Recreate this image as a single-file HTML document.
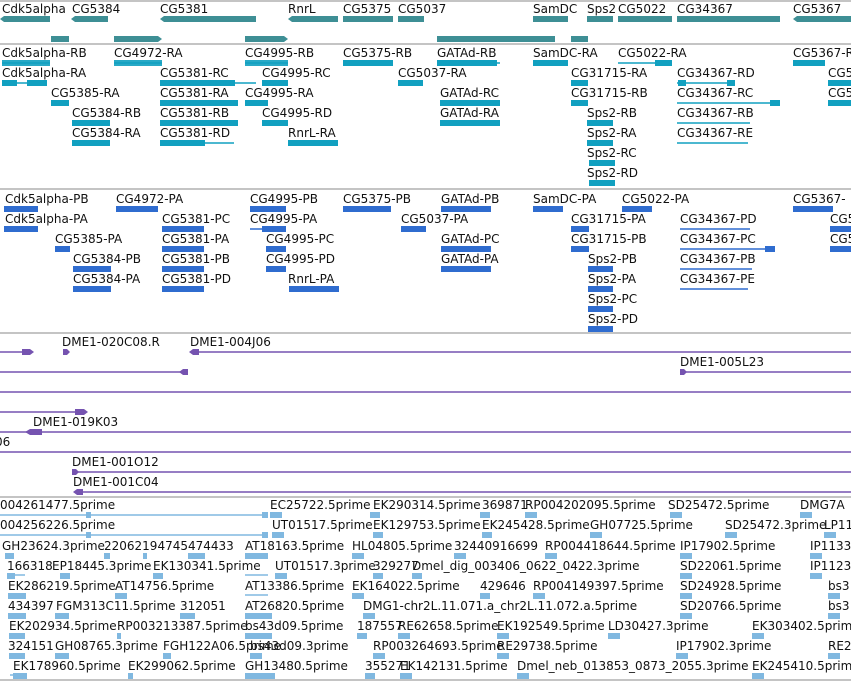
<!DOCTYPE html>
<html><head><meta charset="utf-8"><style>
body{margin:0;background:#fff;}
svg{display:block}
text{font-family:"DejaVu Sans","Liberation Sans",sans-serif;font-size:12px;fill:#111;}
.g{fill:#3e8f95}.t{fill:#11a0c0}.p{fill:#2f6ccf}.u{fill:#7553b0}.l{fill:#80b8e0}
.tl{stroke:#11a0c0;stroke-width:1.5}.pl{stroke:#2f6ccf;stroke-width:1.5}.ul{stroke:#7553b0;stroke-width:1.5}.ll{stroke:#80b8e0;stroke-width:1.5}
</style></head><body>
<svg width="851" height="681" viewBox="0 0 851 681">
<g stroke="#c4c4c4" stroke-width="2">
<line x1="0" y1="1" x2="851" y2="1"/><line x1="0" y1="44" x2="851" y2="44"/><line x1="0" y1="189" x2="851" y2="189"/><line x1="0" y1="333" x2="851" y2="333"/><line x1="0" y1="497" x2="851" y2="497"/><line x1="0" y1="680" x2="851" y2="680"/>
</g>
<text x="2" y="13">Cdk5alpha</text><text x="72" y="13">CG5384</text><text x="160" y="13">CG5381</text><text x="288" y="13">RnrL</text><text x="343" y="13">CG5375</text><text x="398" y="13">CG5037</text><text x="533" y="13">SamDC</text><text x="587" y="13">Sps2</text><text x="618" y="13">CG5022</text><text x="677" y="13">CG34367</text><text x="793" y="13">CG5367</text>
<g class="g">
<polygon points="0,19 4,16 50,16 50,22 4,22"/><polygon points="71,19 75,16 108,16 108,22 75,22"/><polygon points="160,19 164,16 256,16 256,22 164,22"/><polygon points="288,19 292,16 338,16 338,22 292,22"/><rect x="343" y="16" width="50" height="6"/><rect x="398" y="16" width="26" height="6"/><rect x="533" y="16" width="35" height="6"/><rect x="587" y="16" width="26" height="6"/><rect x="618" y="16" width="54" height="6"/><rect x="677" y="16" width="103" height="6"/><polygon points="793,19 797,16 851,16 851,22 797,22"/>
<rect x="51" y="36" width="18" height="6"/><polygon points="114,36 158,36 162,39 158,42 114,42"/><polygon points="245,36 284,36 288,39 284,42 245,42"/><rect x="437" y="36" width="118" height="6"/><rect x="571" y="36" width="17" height="6"/>
</g>
<text x="2" y="57">Cdk5alpha-RB</text><text x="114" y="57">CG4972-RA</text><text x="245" y="57">CG4995-RB</text><text x="343" y="57">CG5375-RB</text><text x="437" y="57">GATAd-RB</text><text x="533" y="57">SamDC-RA</text><text x="618" y="57">CG5022-RA</text><text x="793" y="57">CG5367-R</text>
<text x="2" y="77">Cdk5alpha-RA</text><text x="160" y="77">CG5381-RC</text><text x="262" y="77">CG4995-RC</text><text x="398" y="77">CG5037-RA</text><text x="571" y="77">CG31715-RA</text><text x="677" y="77">CG34367-RD</text><text x="828" y="77">CG5</text>
<text x="51" y="97">CG5385-RA</text><text x="160" y="97">CG5381-RA</text><text x="245" y="97">CG4995-RA</text><text x="440" y="97">GATAd-RC</text><text x="571" y="97">CG31715-RB</text><text x="677" y="97">CG34367-RC</text><text x="828" y="97">CG5</text>
<text x="72" y="117">CG5384-RB</text><text x="160" y="117">CG5381-RB</text><text x="262" y="117">CG4995-RD</text><text x="440" y="117">GATAd-RA</text><text x="587" y="117">Sps2-RB</text><text x="677" y="117">CG34367-RB</text>
<text x="72" y="137">CG5384-RA</text><text x="160" y="137">CG5381-RD</text><text x="288" y="137">RnrL-RA</text><text x="587" y="137">Sps2-RA</text><text x="677" y="137">CG34367-RE</text>
<text x="587" y="157">Sps2-RC</text><text x="587" y="177">Sps2-RD</text>
<g class="tl">
<line x1="2" y1="63" x2="50" y2="63"/><line x1="114" y1="63" x2="162" y2="63"/><line x1="245" y1="63" x2="288" y2="63"/><line x1="343" y1="63" x2="393" y2="63"/><line x1="437" y1="63" x2="500" y2="63"/><line x1="618" y1="63" x2="672" y2="63"/>
<line x1="2" y1="83" x2="47" y2="83"/><line x1="160" y1="83" x2="256" y2="83"/><line x1="262" y1="83" x2="288" y2="83"/><line x1="398" y1="83" x2="423" y2="83"/><line x1="677" y1="83" x2="735" y2="83"/>
<line x1="160" y1="103" x2="238" y2="103"/><line x1="245" y1="103" x2="268" y2="103"/><line x1="440" y1="103" x2="500" y2="103"/><line x1="677" y1="103" x2="780" y2="103"/>
<line x1="160" y1="123" x2="238" y2="123"/><line x1="440" y1="123" x2="500" y2="123"/><line x1="677" y1="123" x2="750" y2="123"/>
<line x1="160" y1="143" x2="234" y2="143"/><line x1="677" y1="143" x2="748" y2="143"/>
</g>
<g class="t">
<rect x="2" y="60" width="48" height="6" opacity=".9"/><rect x="114" y="60" width="48" height="6" opacity=".9"/><rect x="245" y="60" width="43" height="6" opacity=".9"/><rect x="343" y="60" width="50" height="6"/><rect x="437" y="60" width="60" height="6"/><rect x="533" y="60" width="35" height="6"/><rect x="655" y="60" width="17" height="6"/><rect x="793" y="60" width="32" height="6"/>
<rect x="2" y="80" width="15" height="6"/><rect x="27" y="80" width="20" height="6"/><rect x="160" y="80" width="75" height="6"/><rect x="262" y="80" width="26" height="6"/><rect x="398" y="80" width="25" height="6"/><rect x="571" y="80" width="17" height="6"/><rect x="678" y="80" width="8" height="6"/><rect x="727" y="80" width="8" height="6"/><rect x="828" y="80" width="23" height="6"/>
<rect x="51" y="100" width="18" height="6"/><rect x="160" y="100" width="78" height="6"/><rect x="245" y="100" width="23" height="6"/><rect x="440" y="100" width="60" height="6"/><rect x="571" y="100" width="17" height="6"/><rect x="770" y="100" width="10" height="6"/><rect x="828" y="100" width="23" height="6"/>
<rect x="72" y="120" width="38" height="6"/><rect x="160" y="120" width="78" height="6"/><rect x="262" y="120" width="26" height="6"/><rect x="440" y="120" width="60" height="6"/><rect x="587" y="120" width="26" height="6"/>
<rect x="72" y="140" width="38" height="6"/><rect x="160" y="140" width="45" height="6"/><rect x="288" y="140" width="50" height="6"/><rect x="587" y="140" width="26" height="6"/>
<rect x="589" y="160" width="26" height="6"/><rect x="589" y="180" width="26" height="6"/>
</g>
<text x="5" y="203">Cdk5alpha-PB</text><text x="116" y="203">CG4972-PA</text><text x="250" y="203">CG4995-PB</text><text x="343" y="203">CG5375-PB</text><text x="441" y="203">GATAd-PB</text><text x="533" y="203">SamDC-PA</text><text x="622" y="203">CG5022-PA</text><text x="793" y="203">CG5367-</text>
<text x="5" y="223">Cdk5alpha-PA</text><text x="162" y="223">CG5381-PC</text><text x="250" y="223">CG4995-PA</text><text x="401" y="223">CG5037-PA</text><text x="571" y="223">CG31715-PA</text><text x="680" y="223">CG34367-PD</text><text x="830" y="223">CG5</text>
<text x="55" y="243">CG5385-PA</text><text x="162" y="243">CG5381-PA</text><text x="266" y="243">CG4995-PC</text><text x="441" y="243">GATAd-PC</text><text x="571" y="243">CG31715-PB</text><text x="680" y="243">CG34367-PC</text><text x="830" y="243">CG5</text>
<text x="73" y="263">CG5384-PB</text><text x="162" y="263">CG5381-PB</text><text x="266" y="263">CG4995-PD</text><text x="441" y="263">GATAd-PA</text><text x="588" y="263">Sps2-PB</text><text x="680" y="263">CG34367-PB</text>
<text x="73" y="283">CG5384-PA</text><text x="162" y="283">CG5381-PD</text><text x="288" y="283">RnrL-PA</text><text x="588" y="283">Sps2-PA</text><text x="680" y="283">CG34367-PE</text>
<text x="588" y="303">Sps2-PC</text><text x="588" y="323">Sps2-PD</text>
<g class="pl">
<line x1="680" y1="229" x2="750" y2="229"/><line x1="680" y1="249" x2="775" y2="249"/><line x1="680" y1="269" x2="752" y2="269"/><line x1="680" y1="289" x2="748" y2="289"/><line x1="250" y1="209" x2="286" y2="209"/><line x1="250" y1="229" x2="286" y2="229"/>
</g>
<g class="p">
<rect x="4" y="206" width="34" height="6"/><rect x="116" y="206" width="42" height="6"/><rect x="250" y="206" width="36" height="6"/><rect x="343" y="206" width="48" height="6"/><rect x="441" y="206" width="50" height="6"/><rect x="533" y="206" width="30" height="6"/><rect x="622" y="206" width="30" height="6"/><rect x="793" y="206" width="40" height="6"/>
<rect x="4" y="226" width="34" height="6"/><rect x="162" y="226" width="42" height="6"/><rect x="262" y="226" width="24" height="6"/><rect x="401" y="226" width="25" height="6"/><rect x="571" y="226" width="18" height="6"/><rect x="830" y="226" width="21" height="6"/>
<rect x="55" y="246" width="15" height="6"/><rect x="162" y="246" width="42" height="6"/><rect x="266" y="246" width="20" height="6"/><rect x="441" y="246" width="50" height="6"/><rect x="571" y="246" width="18" height="6"/><rect x="765" y="246" width="10" height="6"/><rect x="830" y="246" width="21" height="6"/>
<rect x="73" y="266" width="38" height="6"/><rect x="162" y="266" width="42" height="6"/><rect x="266" y="266" width="20" height="6"/><rect x="441" y="266" width="50" height="6"/><rect x="588" y="266" width="25" height="6"/>
<rect x="73" y="286" width="38" height="6"/><rect x="162" y="286" width="42" height="6"/><rect x="289" y="286" width="50" height="6"/><rect x="588" y="286" width="25" height="6"/>
<rect x="588" y="306" width="25" height="6"/><rect x="588" y="326" width="25" height="6"/>
</g>
<text x="62" y="346">DME1-020C08.R</text><text x="190" y="346">DME1-004J06</text><text x="680" y="366">DME1-005L23</text><text x="33" y="426">DME1-019K03</text><text x="-5" y="446">06</text><text x="72" y="466">DME1-001O12</text><text x="73" y="486">DME1-001C04</text>
<g class="ul">
<line x1="0" y1="352" x2="30" y2="352"/><line x1="192" y1="352" x2="851" y2="352"/><line x1="0" y1="372" x2="185" y2="372"/><line x1="680" y1="372" x2="851" y2="372"/><line x1="0" y1="392" x2="851" y2="392"/><line x1="0" y1="412" x2="85" y2="412"/><line x1="0" y1="432" x2="851" y2="432"/><line x1="0" y1="452" x2="851" y2="452"/><line x1="72" y1="472" x2="851" y2="472"/><line x1="75" y1="492" x2="851" y2="492"/>
</g>
<g class="u">
<polygon points="22,349 30,349 34,352 30,355 22,355"/><polygon points="63,349 67,349 70,352 67,355 63,355"/><polygon points="189,352 193,349 199,349 199,355 193,355"/><polygon points="179,372 183,369 188,369 188,375 183,375"/><polygon points="680,369 684,369 687,372 684,375 680,375"/><polygon points="75,409 84,409 88,412 84,415 75,415"/><polygon points="25,432 30,429 42,429 42,435 30,435"/><polygon points="72,469 76,469 79,472 76,475 72,475"/><polygon points="73,492 77,489 83,489 83,495 77,495"/>
</g>
<text x="0" y="509">004261477.5prime</text><text x="270" y="509">EC25722.5prime</text><text x="373" y="509">EK290314.5prime</text><text x="482" y="509">369871</text><text x="525" y="509">RP004202095.5prime</text><text x="668" y="509">SD25472.5prime</text><text x="800" y="509">DMG7A</text>
<text x="0" y="529">004256226.5prime</text><text x="272" y="529">UT01517.5prime</text><text x="373" y="529">EK129753.5prime</text><text x="482" y="529">EK245428.5prime</text><text x="590" y="529">GH07725.5prime</text><text x="725" y="529">SD25472.3prime</text><text x="824" y="529">LP11</text>
<text x="2" y="550">GH23624.3prime</text><text x="104" y="550">22062194745474433</text><text x="245" y="550">AT18163.5prime</text><text x="352" y="550">HL04805.5prime</text><text x="454" y="550">32440916699</text><text x="545" y="550">RP004418644.5prime</text><text x="680" y="550">IP17902.5prime</text><text x="810" y="550">IP1133</text>
<text x="7" y="570">166318</text><text x="52" y="570">EP18445.3prime</text><text x="153" y="570">EK130341.5prime</text><text x="275" y="570">UT01517.3prime</text><text x="373" y="570">329277</text><text x="412" y="570">Dmel_dig_003406_0622_0422.3prime</text><text x="680" y="570">SD22061.5prime</text><text x="810" y="570">IP1123</text>
<text x="8" y="590">EK286219.5prime</text><text x="115" y="590">AT14756.5prime</text><text x="245" y="590">AT13386.5prime</text><text x="352" y="590">EK164022.5prime</text><text x="480" y="590">429646</text><text x="533" y="590">RP004149397.5prime</text><text x="680" y="590">SD24928.5prime</text><text x="828" y="590">bs3</text>
<text x="8" y="610">434397</text><text x="56" y="610">FGM313C11.5prime</text><text x="180" y="610">312051</text><text x="245" y="610">AT26820.5prime</text><text x="363" y="610">DMG1-chr2L.11.071.a_chr2L.11.072.a.5prime</text><text x="680" y="610">SD20766.5prime</text><text x="828" y="610">bs3</text>
<text x="9" y="630">EK202934.5prime</text><text x="117" y="630">RP003213387.5prime</text><text x="245" y="630">bs43d09.5prime</text><text x="357" y="630">187557</text><text x="398" y="630">RE62658.5prime</text><text x="497" y="630">EK192549.5prime</text><text x="608" y="630">LD30427.3prime</text><text x="752" y="630">EK303402.5prime</text>
<text x="8" y="650">324151</text><text x="55" y="650">GH08765.3prime</text><text x="163" y="650">FGH122A06.5prime</text><text x="250" y="650">bs43d09.3prime</text><text x="373" y="650">RP003264693.5prime</text><text x="497" y="650">RE29738.5prime</text><text x="676" y="650">IP17902.3prime</text><text x="828" y="650">RE2</text>
<text x="13" y="670">EK178960.5prime</text><text x="128" y="670">EK299062.5prime</text><text x="245" y="670">GH13480.5prime</text><text x="365" y="670">355271</text><text x="400" y="670">EK142131.5prime</text><text x="517" y="670">Dmel_neb_013853_0873_2055.3prime</text><text x="752" y="670">EK245410.5prime</text>
<g class="ll">
<line x1="0" y1="515" x2="265" y2="515"/><line x1="0" y1="535" x2="265" y2="535"/><line x1="245" y1="555" x2="268" y2="555"/><line x1="245" y1="575" x2="268" y2="575"/><line x1="245" y1="595" x2="268" y2="595"/><line x1="10" y1="575" x2="25" y2="575"/><line x1="10" y1="595" x2="25" y2="595"/><line x1="10" y1="615" x2="25" y2="615"/><line x1="10" y1="675" x2="25" y2="675"/>
</g>
<g class="l">
<rect x="86" y="512" width="5" height="6"/><rect x="262" y="512" width="6" height="6"/><rect x="270" y="512" width="12" height="6"/><rect x="370" y="512" width="10" height="6"/><rect x="480" y="512" width="10" height="6"/><rect x="525" y="512" width="12" height="6"/><rect x="670" y="512" width="12" height="6"/><rect x="800" y="512" width="12" height="6"/>
<rect x="86" y="532" width="5" height="6"/><rect x="262" y="532" width="6" height="6"/><rect x="272" y="532" width="12" height="6"/><rect x="373" y="532" width="10" height="6"/><rect x="482" y="532" width="10" height="6"/><rect x="590" y="532" width="12" height="6"/><rect x="725" y="532" width="12" height="6"/><rect x="824" y="532" width="12" height="6"/>
<rect x="5" y="553" width="9" height="6"/><rect x="104" y="553" width="6" height="6"/><rect x="143" y="553" width="4" height="6"/><rect x="188" y="553" width="17" height="6"/><rect x="245" y="553" width="23" height="6"/><rect x="352" y="553" width="12" height="6"/><rect x="454" y="553" width="12" height="6"/><rect x="545" y="553" width="12" height="6"/><rect x="680" y="553" width="12" height="6"/><rect x="810" y="553" width="12" height="6"/>
<rect x="7" y="573" width="8" height="6"/><rect x="60" y="573" width="10" height="6"/><rect x="153" y="573" width="10" height="6"/><rect x="275" y="573" width="12" height="6"/><rect x="373" y="573" width="10" height="6"/><rect x="412" y="573" width="10" height="6"/><rect x="680" y="573" width="12" height="6"/><rect x="810" y="573" width="12" height="6"/>
<rect x="8" y="593" width="18" height="6"/><rect x="115" y="593" width="12" height="6"/><rect x="352" y="593" width="12" height="6"/><rect x="480" y="593" width="10" height="6"/><rect x="533" y="593" width="12" height="6"/><rect x="680" y="593" width="12" height="6"/><rect x="828" y="593" width="12" height="6"/>
<rect x="8" y="613" width="18" height="6"/><rect x="55" y="613" width="14" height="6"/><rect x="180" y="613" width="15" height="6"/><rect x="245" y="613" width="27" height="6"/><rect x="363" y="613" width="12" height="6"/><rect x="680" y="613" width="12" height="6"/><rect x="828" y="613" width="12" height="6"/>
<rect x="9" y="633" width="16" height="6"/><rect x="117" y="633" width="4" height="6"/><rect x="245" y="633" width="27" height="6"/><rect x="357" y="633" width="10" height="6"/><rect x="398" y="633" width="12" height="6"/><rect x="497" y="633" width="12" height="6"/><rect x="608" y="633" width="12" height="6"/><rect x="752" y="633" width="12" height="6"/>
<rect x="9" y="653" width="16" height="6"/><rect x="55" y="653" width="14" height="6"/><rect x="163" y="653" width="8" height="6"/><rect x="250" y="653" width="12" height="6"/><rect x="373" y="653" width="12" height="6"/><rect x="497" y="653" width="12" height="6"/><rect x="676" y="653" width="12" height="6"/><rect x="828" y="653" width="12" height="6"/>
<rect x="13" y="673" width="14" height="6"/><rect x="128" y="673" width="5" height="6"/><rect x="245" y="673" width="30" height="6"/><rect x="365" y="673" width="10" height="6"/><rect x="400" y="673" width="12" height="6"/><rect x="517" y="673" width="12" height="6"/><rect x="752" y="673" width="12" height="6"/>
</g>
</svg>
</body></html>
